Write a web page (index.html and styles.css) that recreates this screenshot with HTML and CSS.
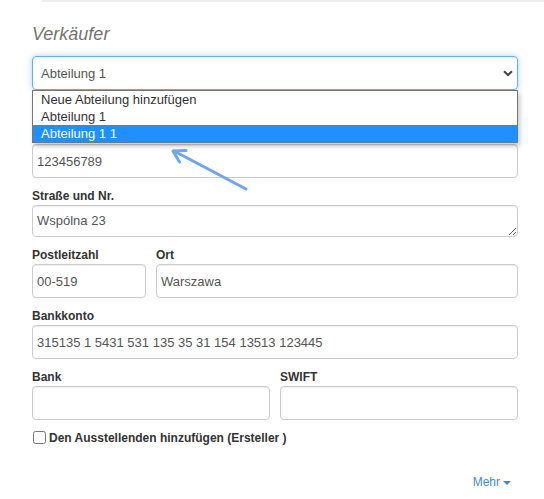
FILE: index.html
```html
<!DOCTYPE html>
<html lang="de">
<head>
<meta charset="utf-8">
<title>Verkäufer</title>
<link rel="stylesheet" href="styles.css">
</head>
<body>
<div class="topline"></div>
<div class="form">
  <h2 class="title">Verkäufer</h2>
  <div class="select-group">
    <div class="select">
      <span>Abteilung 1</span>
      <svg class="chev" width="10" height="7" viewBox="0 0 10 7"><path d="M1 1.2 L5 5 L9 1.2" fill="none" stroke="#444" stroke-width="2"/></svg>
    </div>
    <ul class="dropdown">
      <li>Neue Abteilung hinzufügen</li>
      <li>Abteilung 1</li>
      <li class="active">Abteilung 1 1</li>
    </ul>
  </div>
  <div class="group">
    <input class="input" type="text" value="123456789">
  </div>
  <div class="group">
    <label class="label">Straße und Nr.</label>
    <textarea class="textarea">Wspólna 23</textarea>
  </div>
  <div class="group row-zip">
    <div>
      <label class="label">Postleitzahl</label>
      <input class="input" type="text" value="00-519">
    </div>
    <div>
      <label class="label">Ort</label>
      <input class="input" type="text" value="Warszawa">
    </div>
  </div>
  <div class="group">
    <label class="label">Bankkonto</label>
    <input class="input" type="text" value="315135 1 5431 531 135 35 31 154 13513 123445">
  </div>
  <div class="group row-bank">
    <div>
      <label class="label">Bank</label>
      <input class="input" type="text" value="">
    </div>
    <div>
      <label class="label">SWIFT</label>
      <input class="input" type="text" value="">
    </div>
  </div>
  <label class="check"><input type="checkbox" class="cb"><span>Den Ausstellenden hinzufügen (Ersteller )</span></label>
  <div class="more"><a class="more-link">Mehr<span class="caret"></span></a></div>
</div>
<svg class="arrow" width="544" height="499" viewBox="0 0 544 499">
  <g fill="none" stroke="#6ea6f2" stroke-width="3" stroke-linecap="round" stroke-linejoin="round">
    <path d="M246 189 L174 151"/>
    <path d="M186 150.5 L173 151 L179.5 162"/>
  </g>
</svg>
</body>
</html>
```
FILE: styles.css
```css
html, body {
  margin: 0;
  padding: 0;
  background: #fff;
}
body {
  position: relative;
  width: 544px;
  height: 499px;
  overflow: hidden;
  font-family: "Liberation Sans", Arial, sans-serif;
}
.topline {
  margin-left: 42px;
  height: 2px;
  background: #eeeeee;
}
.form {
  width: 486px;
  margin-left: 32px;
}
.title {
  margin: 22px 0 12px 0;
  font: italic 400 18px/20px "Liberation Sans", Arial, sans-serif;
  color: #737373;
}
.select-group {
  position: relative;
  margin-bottom: 54px;
}
.select {
  box-sizing: border-box;
  height: 34px;
  border: 1px solid #66afe9;
  border-radius: 4px;
  box-shadow: inset 0 1px 1px rgba(0,0,0,.075), 0 0 6px rgba(102,175,233,.55);
  display: flex;
  align-items: center;
  justify-content: space-between;
  padding: 0 4px 0 8px;
  font-size: 13px;
  color: #555;
  position: relative;
}
.chev {
  display: block;
  margin-right: 0;
}
.dropdown {
  position: absolute;
  top: 34px;
  left: 0;
  right: 0;
  margin: 0;
  padding: 0;
  list-style: none;
  background: #fff;
  border: 1px solid #767676;
  box-shadow: 2px 3px 5px rgba(0,0,0,.22);
  z-index: 5;
  font-size: 13px;
  color: #333;
}
.dropdown li {
  height: 17px;
  line-height: 17px;
  padding-left: 8px;
  white-space: nowrap;
}
.dropdown li.active {
  background: #1e90ff;
  color: #fff;
}
.group {
  margin-bottom: 10px;
}
.label {
  display: block;
  font: 700 12px/17px "Liberation Sans", Arial, sans-serif;
  color: #333;
  margin: 0;
}
.input {
  display: block;
  box-sizing: border-box;
  width: 100%;
  height: 34px;
  margin: 0;
  border: 1px solid #ccc;
  border-radius: 4px;
  padding: 0 4px;
  font: 13px "Liberation Sans", Arial, sans-serif;
  color: #555;
  background: #fff;
  box-shadow: inset 0 1px 1px rgba(0,0,0,.075);
  outline: none;
}
.textarea {
  display: block;
  box-sizing: border-box;
  width: 100%;
  height: 32px;
  margin: 0;
  border: 1px solid #ccc;
  border-radius: 4px;
  padding: 6px 4px;
  font: 13px/18px "Liberation Sans", Arial, sans-serif;
  color: #555;
  box-shadow: inset 0 1px 1px rgba(0,0,0,.075);
  overflow: hidden;
  outline: none;
}
.row-zip {
  display: grid;
  grid-template-columns: 114px 1fr;
  column-gap: 10px;
}
.row-bank {
  display: grid;
  grid-template-columns: 1fr 1fr;
  column-gap: 10px;
}
.check {
  display: flex;
  align-items: flex-start;
  margin-top: 10px;
  font: 700 12px/17px "Liberation Sans", Arial, sans-serif;
  color: #333;
}
.cb {
  width: 13px;
  height: 13px;
  margin: 1px 3px 0 1px;
}
.more {
  margin-top: 27px;
  text-align: right;
  padding-right: 7px;
  font: 12px/17px "Liberation Sans", Arial, sans-serif;
}
.more-link {
  color: #428bca;
  text-decoration: none;
}
.caret {
  display: inline-block;
  width: 0;
  height: 0;
  margin-left: 3px;
  vertical-align: middle;
  border-top: 4px solid #428bca;
  border-left: 4px solid transparent;
  border-right: 4px solid transparent;
}
.arrow {
  position: absolute;
  left: 0;
  top: 0;
  pointer-events: none;
  z-index: 10;
}
```
